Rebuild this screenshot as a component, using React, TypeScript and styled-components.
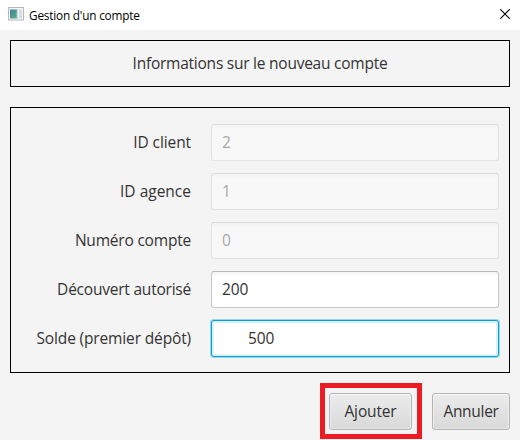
import React from "react";
import styled, { createGlobalStyle, css } from "styled-components";

const GlobalStyle = createGlobalStyle`
  *, *::before, *::after { box-sizing: border-box; }
  body {
    margin: 0;
    background: #f4f4f4;
    color: #333;
    font-family: "Segoe UI", "Open Sans", "Noto Sans", sans-serif;
    font-size: 15.5px;
  }
`;

const Window = styled.div`
  display: flex;
  flex-direction: column;
  width: 520px;
  height: 440px;
  overflow: hidden;
  background: #f4f4f4;
`;

const TitleBar = styled.header`
  display: flex;
  align-items: center;
  flex: none;
  height: 30px;
  padding: 0 10px 0 8px;
  background: #fff;
  color: #000;
  font-size: 11.8px;
`;

const AppIcon = styled.svg`
  flex: none;
  width: 16px;
  height: 14px;
  margin: 0 5px 3px 0;
`;

const CloseIcon = styled.svg`
  flex: none;
  width: 10px;
  height: 10px;
  margin: 0 0 2px auto;
`;

const Text = styled.span<{ $spacing?: number }>`
  white-space: nowrap;
  line-height: 20px;
  letter-spacing: ${(p) => p.$spacing ?? 0}px;
`;

const Content = styled.main`
  display: flex;
  flex-direction: column;
  gap: 20px;
  padding: 10px;
`;

const Banner = styled.section`
  display: flex;
  align-items: center;
  justify-content: center;
  height: 47px;
  padding-bottom: 1px;
  border: 1px solid #000;
`;

const Form = styled.section`
  display: flex;
  flex-direction: column;
  gap: 12px;
  height: 266px;
  padding: 16px 10px 0 10px;
  border: 1px solid #000;
`;

const Row = styled.label`
  display: grid;
  grid-template-columns: 170px 288px;
  column-gap: 20px;
  align-items: center;
  justify-items: end;

  & > ${Text} {
    padding-bottom: 2px;
  }
`;

const Input = styled.input<{ $indent?: number }>`
  width: 288px;
  height: 37px;
  padding: 0 10px 1px ${(p) => 10 + (p.$indent ?? 0)}px;
  border: 1px solid #c8c8c8;
  border-top-color: #b8b8b8;
  border-radius: 3px;
  outline: none;
  background: linear-gradient(#f3f3f3, #fff 4px);
  color: #333;
  font: inherit;
  letter-spacing: -0.1px;

  &:disabled {
    border-color: #e1e1e1;
    border-top-color: #dadada;
    background: linear-gradient(#f2f2f2, #f8f8f8 4px);
    color: #a8a8a8;
  }

  &:focus {
    border-color: #039ed3;
    background: #fff;
    box-shadow: 0 0 0 1px #9bd5eb, inset 0 0 0 2px #d9f1f9;
    caret-color: transparent;
  }
`;

const Actions = styled.footer`
  display: flex;
  justify-content: flex-end;
  gap: 20px;
`;

const Button = styled.button<{ $width: number; $marked?: boolean }>`
  position: relative;
  width: ${(p) => p.$width}px;
  height: 37px;
  padding: 0 0 1px;
  border: 1px solid #b5b5b5;
  border-radius: 3px;
  background: linear-gradient(#ececec, #d9d9d9);
  box-shadow: inset 0 1px 0 #fafafa, inset 1px 0 0 #ededed,
    inset -1px 0 0 #ededed, inset 0 -1px 0 #e2e2e2;
  color: #333;
  font: inherit;

  ${(p) =>
    p.$marked &&
    css`
      &::after {
        content: "";
        position: absolute;
        inset: -11px -11px -10px -10px;
        border: 5px solid #ed1c24;
      }
    `}
`;

const fields = [
  { label: "ID client", value: "2", disabled: true, spacing: -0.1 },
  { label: "ID agence", value: "1", disabled: true, spacing: 0 },
  { label: "Numéro compte", value: "0", disabled: true, spacing: -0.2 },
  { label: "Découvert autorisé", value: "200", disabled: false, spacing: -0.22 },
  { label: "Solde (premier dépôt)", value: "500", disabled: false, spacing: -0.14, focused: true, indent: 26 },
];

export default function App() {
  return (
    <>
      <GlobalStyle />
      <Window>
        <TitleBar>
          <AppIcon viewBox="0 0 16 14">
            <defs>
              <linearGradient id="pane" x1="0" y1="0" x2="1" y2="1">
                <stop offset="0" stopColor="#4679a8" />
                <stop offset="1" stopColor="#5cb87a" />
              </linearGradient>
            </defs>
            <rect x="0.5" y="0.5" width="15" height="12.5" fill="#f5f6f7" stroke="#b4b9be" />
            <rect x="2" y="2.5" width="8" height="9" fill="url(#pane)" />
            <rect x="8.7" y="2.5" width="1.3" height="9" fill="#c9dde0" />
            <rect x="11" y="2.5" width="3" height="9" fill="#d9dde0" />
          </AppIcon>
          <Text $spacing={-0.2}>Gestion d'un compte</Text>
          <CloseIcon viewBox="0 0 10 10">
            <path d="M0.3 0.3L9.7 9.7M9.7 0.3L0.3 9.7" stroke="#000" strokeWidth="1.1" fill="none" />
          </CloseIcon>
        </TitleBar>
        <Content>
          <Banner>
            <Text $spacing={-0.24}>Informations sur le nouveau compte</Text>
          </Banner>
          <Form>
            {fields.map((f) => (
              <Row key={f.label}>
                <Text $spacing={f.spacing}>{f.label}</Text>
                <Input
                  defaultValue={f.value}
                  disabled={f.disabled}
                  autoFocus={f.focused}
                  $indent={f.indent}
                />
              </Row>
            ))}
          </Form>
          <Actions>
            <Button $width={83} $marked>
              <Text $spacing={-0.15}>Ajouter</Text>
            </Button>
            <Button $width={78}>
              <Text $spacing={-0.3}>Annuler</Text>
            </Button>
          </Actions>
        </Content>
      </Window>
    </>
  );
}
